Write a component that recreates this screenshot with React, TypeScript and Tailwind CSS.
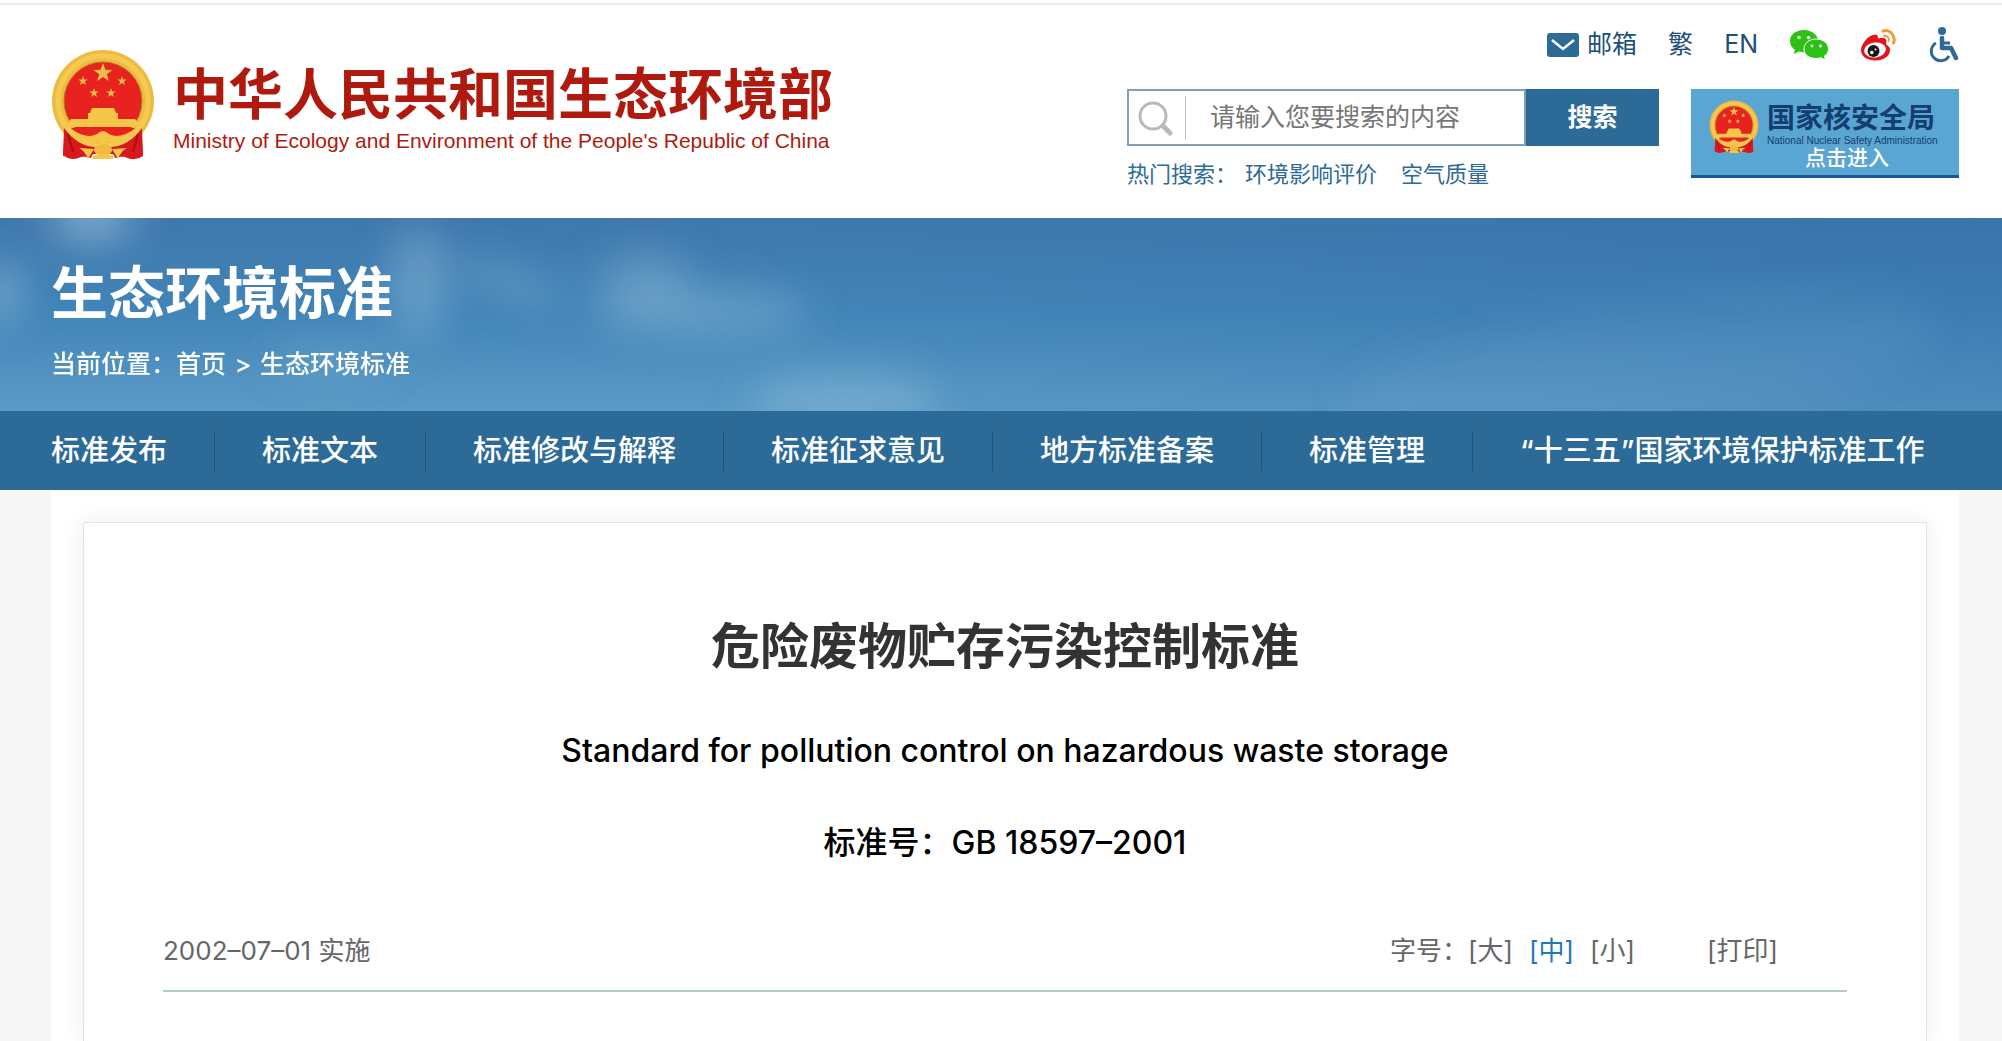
import { useState } from "react";

const navItems = [
  "标准发布",
  "标准文本",
  "标准修改与解释",
  "标准征求意见",
  "地方标准备案",
  "标准管理",
  "“十三五”国家环境保护标准工作",
];

const sizes = ["大", "中", "小"];

function Star({ x, y, r }: { x: number; y: number; r: number }) {
  const points = Array.from({ length: 10 }, (_, i) => {
    const radius = i % 2 ? r * 0.4 : r;
    const a = -Math.PI / 2 + (i * Math.PI) / 5;
    return `${x + radius * Math.cos(a)},${y + radius * Math.sin(a)}`;
  }).join(" ");
  return <polygon points={points} fill="#e9bd4d" />;
}

function Emblem({ className }: { className: string }) {
  return (
    <svg className={className} viewBox="0 0 104 110" aria-hidden="true">
      <path d="M14 76 L90 76 L92 106 Q84 112 74 107 L60 104 L44 104 L30 107 Q20 112 12 105 Z" fill="#d8181c" />
      <circle cx="52" cy="51" r="51" fill="#edbb3f" />
      <circle cx="52" cy="51" r="45" fill="none" stroke="#f4ca52" strokeWidth="5" />
      <circle cx="52" cy="51" r="39" fill="#e7221f" stroke="#b57b26" strokeWidth="1" />
      <Star x={52} y={23} r={10} />
      <Star x={32} y={31} r={5} />
      <Star x={71} y={31} r={5} />
      <Star x={43} y={43} r={5} />
      <Star x={60} y={43} r={5} />
      <path d="M41 58 H63 L65 63 H67 V69 H84 L90 77 H14 L20 69 H37 V63 H39 Z" fill="#f6c64b" />
      <path d="M20 78 H84 L76 88 H28 Z" fill="#e7221f" />
      <path d="M18 77 Q34 90 46 84 Q52 78 58 84 Q70 90 86 77 L78 88 Q66 96 58 91 L52 94 L46 91 Q38 96 26 88 Z" fill="#f6c64b" />
      <path d="M13 78 Q26 96 44 97 L40 108 Q26 104 12 106 Z M91 78 Q78 96 60 97 L64 108 Q78 104 92 106 Z" fill="#d8181c" />
      <path d="M17 84 L22 102 M87 84 L82 102" stroke="#a80f14" strokeWidth="2" />
      <ellipse cx="52" cy="100" rx="9" ry="6" fill="#f2b93f" />
      <path d="M28 98 L43 99 L37 109 Q34 101 28 98 Z M76 98 L61 99 L67 109 Q70 101 76 98 Z M42 106 Q52 102 62 106 V109 H42 Z" fill="#f6c64b" />
    </svg>
  );
}

function MailIcon() {
  return (
    <svg className="h-6 w-8" viewBox="0 0 32 24" aria-hidden="true">
      <rect width="32" height="24" rx="3" fill="#2c6a98" />
      <path d="M5 7 L16 16 L27 7" fill="none" stroke="#fff" strokeWidth="2.500" />
    </svg>
  );
}

function WechatIcon() {
  return (
    <svg className="h-8 w-10" viewBox="0 0 40 32" aria-hidden="true">
      <path d="M15 1 C6 1 1 6 1 12 C1 16 3 19 6 21 L4.500 25 L10 22.500 Q13 23.500 17 23 C27 22 29 16 29 12 C29 6 23 1 15 1 Z" fill="#2dc116" />
      <circle cx="10" cy="8.500" r="1.700" fill="#fff" />
      <circle cx="19.500" cy="8.500" r="1.700" fill="#fff" />
      <path d="M27 10 C20 10 15 14.500 15 20 C15 25.500 20 29.500 27 29.500 Q29.500 29.500 32 28.700 L36.500 31 L35.500 27 C38 25.500 39.500 23 39.500 20 C39.500 14.500 34.500 10 27 10 Z" fill="#2dc116" stroke="#fff" strokeWidth="1" />
      <circle cx="23" cy="17" r="1.400" fill="#fff" />
      <circle cx="31.500" cy="17" r="1.400" fill="#fff" />
    </svg>
  );
}

function WeiboIcon() {
  return (
    <svg className="h-8 w-9" viewBox="0 0 36 32" aria-hidden="true">
      <path d="M13 6 C8 7 1 15 1 21 C1 28 8 31.500 15 31.500 C24 31.500 30 27 30 21 C30 18 28 16.500 26 15.500 C28 9 24 7.500 18 9.500 C18 5 16 5 13 6 Z" fill="#e0161c" />
      <ellipse cx="15" cy="21" rx="11" ry="7.500" fill="#fff" transform="rotate(-8 15 21)" />
      <circle cx="13.500" cy="22" r="6" fill="#1b1616" />
      <circle cx="11.800" cy="23.500" r="1.800" fill="#fff" />
      <circle cx="15.500" cy="20.500" r="1" fill="#fff" />
      <path d="M23 2 C30 0 36 7 33.500 14" fill="none" stroke="#f29a38" strokeWidth="3" strokeLinecap="round" />
      <path d="M24 7 C27 6 30 9.500 28.500 12" fill="none" stroke="#f29a38" strokeWidth="2" strokeLinecap="round" />
    </svg>
  );
}

function WheelchairIcon() {
  return (
    <svg className="h-9 w-8" viewBox="0 0 32 36" fill="none" stroke="#2c6a98" aria-hidden="true">
      <circle cx="15" cy="4" r="4" fill="#2c6a98" stroke="none" />
      <path d="M15 11 V21 H24 L29 31" strokeWidth="4.500" strokeLinejoin="round" strokeLinecap="round" />
      <path d="M15 16 H23" strokeWidth="3" />
      <path d="M9 16 A9.500 9.500 0 1 0 22 29" strokeWidth="3" />
    </svg>
  );
}

function SearchIcon() {
  return (
    <svg className="h-9 w-9" viewBox="0 0 36 36" fill="none" stroke="#b9b9b9" strokeWidth="3" aria-hidden="true">
      <circle cx="16" cy="16" r="13" />
      <path d="M26 26 L33 33" strokeWidth="5" strokeLinecap="round" />
    </svg>
  );
}

function Sky() {
  return (
    <svg className="absolute inset-0 h-full w-full" viewBox="0 0 2002 193" preserveAspectRatio="none" aria-hidden="true">
      <defs>
        <linearGradient id="sky" x1="0" y1="0" x2="0" y2="1">
          <stop offset="0" stopColor="#3f78ad" />
          <stop offset="0.500" stopColor="#4285b8" />
          <stop offset="1" stopColor="#5a9ac6" />
        </linearGradient>
        <linearGradient id="shade" x1="0" y1="0" x2="1" y2="0">
          <stop offset="0.400" stopColor="#2f6aa8" stopOpacity="0" />
          <stop offset="1" stopColor="#2f6aa8" stopOpacity="0.300" />
        </linearGradient>
        <filter id="soft" x="-50%" y="-100%" width="200%" height="300%">
          <feGaussianBlur stdDeviation="20" />
        </filter>
      </defs>
      <rect width="2002" height="193" fill="url(#sky)" />
      <rect width="2002" height="193" fill="url(#shade)" />
      <g filter="url(#soft)" fill="#9cc3dd">
        <ellipse cx="92" cy="0" rx="42" ry="20" opacity="0.800" />
        <ellipse cx="0" cy="75" rx="22" ry="30" opacity="0.550" />
        <ellipse cx="418" cy="65" rx="26" ry="56" opacity="0.450" />
        <ellipse cx="510" cy="65" rx="60" ry="14" opacity="0.350" transform="rotate(20 510 65)" />
        <ellipse cx="645" cy="60" rx="46" ry="26" opacity="0.350" />
        <ellipse cx="700" cy="94" rx="110" ry="20" opacity="0.450" />
        <ellipse cx="845" cy="184" rx="95" ry="30" opacity="0.400" />
        <ellipse cx="330" cy="140" rx="60" ry="16" opacity="0.250" />
        <ellipse cx="1640" cy="150" rx="300" ry="60" opacity="0.100" transform="rotate(-8 1640 150)" />
      </g>
    </svg>
  );
}

function Header() {
  return (
    <header className="flex justify-between border-t-2 border-[#ebebeb] bg-white pr-[43px] pb-7 pl-[51px]">
      <a href="#home" className="flex items-start gap-[18px] pt-11">
        <Emblem className="h-[112px] w-[104px]" />
        <div className="pt-3 text-[#b01a0e]">
          <div className="text-[55px] leading-[66px] font-bold">中华人民共和国生态环境部</div>
          <div className="font-[Liberation_Sans] text-[21px] leading-7">
            Ministry of Ecology and Environment of the People's Republic of China
          </div>
        </div>
      </a>

      <div className="pt-5">
        <div className="flex h-10 items-center justify-end gap-[31px] text-[25px] text-[#1d4f7b]">
          <a href="#mail" className="flex items-center gap-2">
            <MailIcon />
            邮箱
          </a>
          <a href="#traditional">繁</a>
          <a href="#en">EN</a>
          <a href="#wechat" aria-label="微信"><WechatIcon /></a>
          <a href="#weibo" aria-label="微博"><WeiboIcon /></a>
          <a href="#accessibility" aria-label="无障碍"><WheelchairIcon /></a>
        </div>

        <div className="mt-6 flex items-start gap-8">
          <div>
            <form className="flex h-[57px]" onSubmit={(e) => e.preventDefault()}>
              <label className="flex w-[399px] items-center border-2 border-[#7f9fb8] bg-white pl-2">
                <SearchIcon />
                <span className="ml-3 h-11 w-px bg-[#c4c4c4]" />
                <input
                  type="text"
                  aria-label="搜索"
                  placeholder="请输入您要搜索的内容"
                  className="min-w-0 flex-1 pl-6 text-[25px] outline-none placeholder:text-[#767676]"
                />
              </label>
              <button type="submit" className="w-[133px] bg-[#2c6a98] text-[25px] font-bold text-white">
                搜索
              </button>
            </form>
            <div className="mt-3 flex text-[22px] leading-8 text-[#2c6a98]">
              <span>热门搜索：</span>
              <a href="#eia" className="ml-2">环境影响评价</a>
              <a href="#air" className="ml-6">空气质量</a>
            </div>
          </div>

          <a href="#nnsa" className="flex h-[89px] w-[268px] gap-2 border-b-[3px] border-[#1a549a] bg-[#5aa6d2] pt-[11px] pl-[18px]">
            <Emblem className="h-[54px] w-[50px] shrink-0" />
            <div className="whitespace-nowrap text-[#123f70]">
              <div className="text-[28px] leading-9 font-bold">国家核安全局</div>
              <div className="font-[Liberation_Sans] text-[10px] leading-[10px]">National Nuclear Safety Administration</div>
              <div className="pl-[38px] text-[21px] leading-6 font-medium text-white">点击进入</div>
            </div>
          </a>
        </div>
      </div>
    </header>
  );
}

export default function App() {
  const [size, setSize] = useState("中");

  return (
    <div className="flex min-h-screen flex-col bg-[#f7f7f7] font-[Inter,'Noto_Sans_CJK_SC',sans-serif]">
      <div className="h-[3px] bg-white" />
      <Header />

      <section className="relative h-[193px] overflow-hidden text-white">
        <Sky />
        <div className="relative px-[51px] pt-9">
          <h1 className="text-[57px] leading-[80px] font-bold">生态环境标准</h1>
          <div className="mt-3 text-[25px] leading-9 font-medium">
            当前位置：<a href="#home">首页</a>
            <span className="mx-0.5"> &gt; </span>
            <a href="#standards">生态环境标准</a>
          </div>
        </div>
      </section>

      <nav className="flex h-[79px] items-center bg-[#2c6a98] pl-1 text-[29px] font-medium text-white">
        {navItems.map((item) => (
          <a
            key={item}
            href="#nav"
            className="border-r border-[#1f527c] px-[47px] leading-10 whitespace-nowrap last:border-r-0"
          >
            {item}
          </a>
        ))}
      </nav>

      <main className="mr-[43px] ml-[51px] flex flex-1 bg-white px-8 pt-8">
        <article className="flex-1 border border-b-0 border-[#e6e6e6] bg-white px-[79px] shadow-[0_0_20px_rgba(0,0,0,0.08)]">
          <h2 className="mt-[88px] text-center text-[49px] leading-[72px] font-bold text-[#333]">
            危险废物贮存污染控制标准
          </h2>
          <p className="mt-11 text-center text-[32px] leading-[48px] font-medium text-black">
            Standard for pollution control on hazardous waste storage
          </p>
          <p className="mt-11 text-center text-[32px] leading-[48px] font-medium text-black">
            标准号：GB 18597–2001
          </p>
          <div className="mt-16 flex justify-between border-b-2 border-[#b4c9cb] pr-[69px] pb-[19px] text-[26px] leading-10 text-[#666]">
            <span>2002–07–01 实施</span>
            <div className="flex">
              <span>字号：</span>
              {sizes.map((s) => (
                <button
                  key={s}
                  type="button"
                  onClick={() => setSize(s)}
                  className={s === size ? "mr-4 text-[#1f78bd]" : "mr-4"}
                >
                  [{s}]
                </button>
              ))}
              <button type="button" className="ml-14">[打印]</button>
            </div>
          </div>
        </article>
      </main>
    </div>
  );
}
